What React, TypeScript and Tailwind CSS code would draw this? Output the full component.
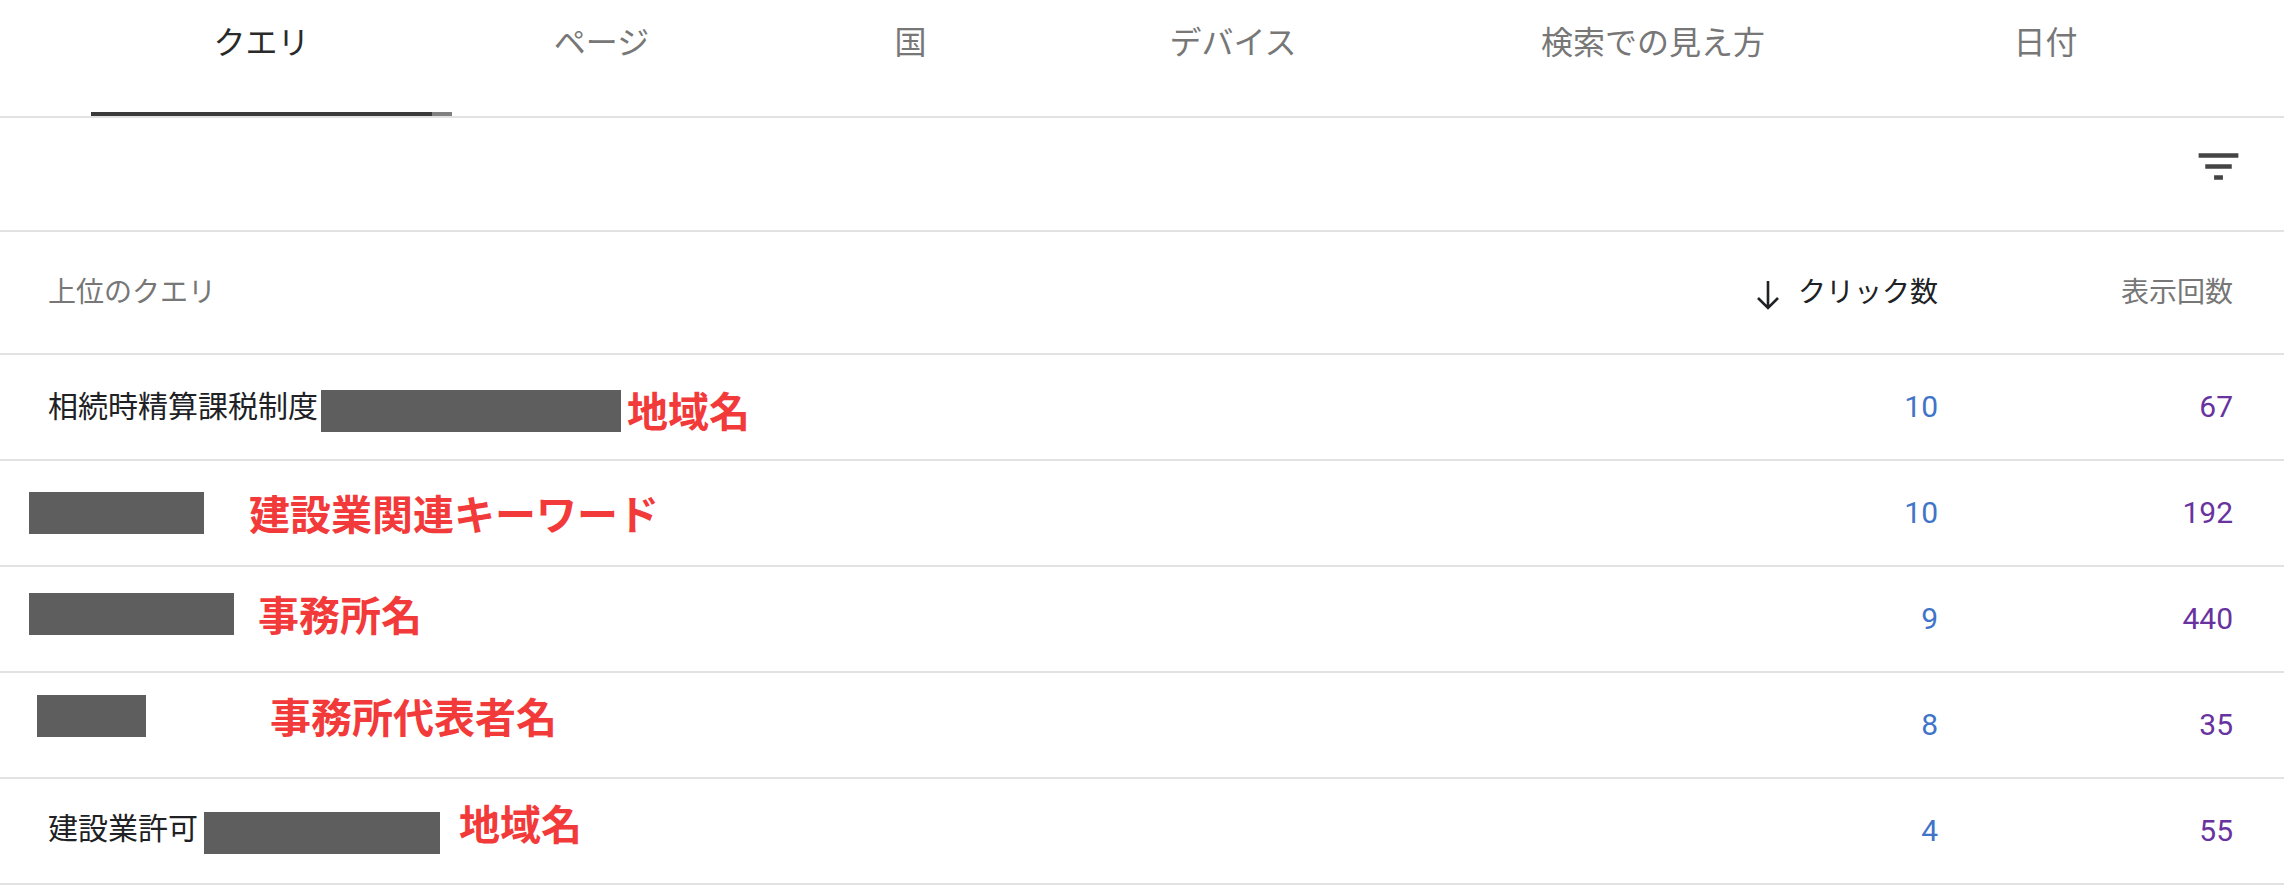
import React from "react";

const FONT = { fontFamily: 'Roboto, "Noto Sans CJK JP", "Noto Sans", sans-serif' } as React.CSSProperties;

function Tab({ label, w, active }: { label: string; w: string; active?: boolean }) {
  return (
    <div className={`relative h-full ${w} flex justify-center`}>
      <span
        className={`pt-[27px] text-[32px] leading-[32px] ${active ? "text-[#2a2a2a]" : "text-[#777777]"}`}
      >
        {label}
      </span>
      {active && (
        <div className="absolute bottom-0 left-0 flex h-[4px]">
          <div className="h-full w-[341px] bg-[#3a3a3a]" />
          <div className="h-full w-[20px] bg-[#808080]" />
        </div>
      )}
    </div>
  );
}

function Num({ clicks, imps }: { clicks: string; imps: string }) {
  return (
    <>
      <div className="w-[300px] text-right text-[30px] leading-none text-[#3f74c9]">{clicks}</div>
      <div className="w-[346px] pr-[51px] text-right text-[30px] leading-none text-[#68339f]">{imps}</div>
    </>
  );
}

const Box = ({ cls }: { cls: string }) => <div className={`h-[42px] bg-[#5e5e5e] ${cls}`} />;
const Red = ({ children, cls }: { children: React.ReactNode; cls: string }) => (
  <span className={`text-[41px] font-bold leading-none whitespace-nowrap text-[#f23a3a] ${cls}`}>{children}</span>
);

export default function App() {
  return (
    <div className="w-[2284px] h-[886px] bg-white overflow-hidden" style={FONT}>
      {/* Tabs */}
      <div className="flex h-[118px] border-b-2 border-[#e2e2e2] pl-[91px]">
        <Tab label="クエリ" w="w-[341px]" active />
        <Tab label="ページ" w="w-[339px]" />
        <Tab label="国" w="w-[279px]" />
        <Tab label="デバイス" w="w-[366px]" />
        <Tab label="検索での見え方" w="w-[474px]" />
        <Tab label="日付" w="w-[311px]" />
      </div>

      {/* Filter bar */}
      <div className="flex h-[114px] justify-end border-b-2 border-[#e2e2e2] pt-[22px] pr-[39px]">
        <svg width="53" height="53" viewBox="0 0 24 24">
          <path d="M10 18h4v-2h-4v2zM3 6v2h18V6H3zm3 7h12v-2H6v2z" fill="#444444" />
        </svg>
      </div>

      {/* Header */}
      <div className="flex h-[123px] items-center border-b-2 border-[#e2e2e2]">
        <div className="flex-1 pl-[48px] text-[28px] leading-none text-[#777777]">上位のクエリ</div>
        <div className="flex w-[300px] items-center justify-end text-[28px] leading-none text-[#202124]">
          <svg width="24" height="30" viewBox="0 0 24 30" className="mr-[18px] mt-[4px]">
            <path d="M12 1v27M2 18l10 10 10-10" stroke="#202124" strokeWidth="2.6" fill="none" />
          </svg>
          <span>クリック数</span>
        </div>
        <div className="w-[346px] pr-[51px] text-right text-[28px] leading-none text-[#777777]">表示回数</div>
      </div>

      {/* Row 1 */}
      <div className="flex h-[106px] items-center border-b-2 border-[#e2e2e2]">
        <div className="flex flex-1 items-center pl-[48px]">
          <span className="text-[30px] leading-none text-[#202124]">相続時精算課税制度</span>
          <Box cls="ml-[3px] mt-[7px] w-[300px]" />
          <Red cls="ml-[6px] mt-[12px]">地域名</Red>
        </div>
        <Num clicks="10" imps="67" />
      </div>

      {/* Row 2 */}
      <div className="flex h-[106px] items-center border-b-2 border-[#e2e2e2]">
        <div className="flex flex-1 items-center pl-[29px]">
          <Box cls="w-[175px]" />
          <Red cls="ml-[45px] mt-[7px]">建設業関連キーワード</Red>
        </div>
        <Num clicks="10" imps="192" />
      </div>

      {/* Row 3 */}
      <div className="flex h-[106px] items-center border-b-2 border-[#e2e2e2]">
        <div className="flex flex-1 items-center pl-[29px]">
          <Box cls="w-[205px] mb-[10px]" />
          <Red cls="ml-[24px] mb-[3px]">事務所名</Red>
        </div>
        <Num clicks="9" imps="440" />
      </div>

      {/* Row 4 */}
      <div className="flex h-[106px] items-center border-b-2 border-[#e2e2e2]">
        <div className="flex flex-1 items-center pl-[37px]">
          <Box cls="w-[109px] mb-[18px]" />
          <Red cls="ml-[124px] mb-[12px]">事務所代表者名</Red>
        </div>
        <Num clicks="8" imps="35" />
      </div>

      {/* Row 5 */}
      <div className="flex h-[106px] items-center border-b-2 border-[#e2e2e2]">
        <div className="flex flex-1 items-center pl-[48px]">
          <span className="text-[30px] leading-none text-[#202124] mb-[4px]">建設業許可</span>
          <Box cls="ml-[6px] w-[236px] mt-[3px]" />
          <Red cls="ml-[19px] mb-[9px]">地域名</Red>
        </div>
        <Num clicks="4" imps="55" />
      </div>
    </div>
  );
}
